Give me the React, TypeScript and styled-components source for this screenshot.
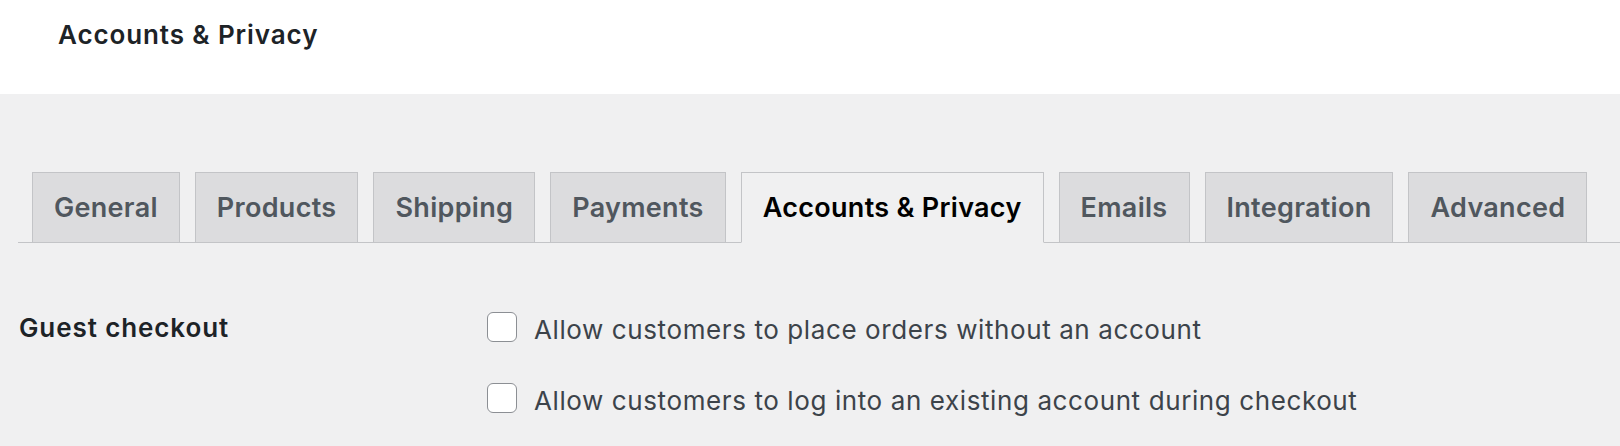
import styled, { createGlobalStyle } from "styled-components";

const GlobalStyle = createGlobalStyle`
  html, body {
    margin: 0;
    padding: 0;
    background: #f0f0f1;
  }
  body {
    font-family: Inter, "Noto Sans", "Liberation Sans", sans-serif;
    color: #3c434a;
  }
`;

const tabs = [
  "General",
  "Products",
  "Shipping",
  "Payments",
  "Accounts & Privacy",
  "Emails",
  "Integration",
  "Advanced",
];

const guestOptions = [
  "Allow customers to place orders without an account",
  "Allow customers to log into an existing account during checkout",
];

export default function App() {
  return (
    <>
      <GlobalStyle />
      <Header>
        <PageTitle>Accounts &amp; Privacy</PageTitle>
      </Header>
      <Main>
        <TabNav>
          {tabs.map((tab) => (
            <Tab key={tab} $active={tab === "Accounts & Privacy"}>
              {tab}
            </Tab>
          ))}
        </TabNav>
        <FormRow>
          <RowLabel>Guest checkout</RowLabel>
          <Options>
            {guestOptions.map((option) => (
              <OptionLabel key={option}>
                <Checkbox type="checkbox" />
                <OptionText>{option}</OptionText>
              </OptionLabel>
            ))}
          </Options>
        </FormRow>
      </Main>
    </>
  );
}

const Header = styled.header`
  height: 94px;
  background: #fff;
  padding: 18px 0 0 58px;
  box-sizing: border-box;
`;

const PageTitle = styled.h1`
  margin: 0;
  font-size: 26px;
  line-height: 34px;
  font-weight: 600;
  letter-spacing: 0.9px;
  color: #1d2327;
`;

const Main = styled.main`
  padding: 78px 0 0 18px;
`;

const TabNav = styled.nav`
  display: flex;
  align-items: flex-end;
  gap: 15px;
  padding-left: 14px;
  border-bottom: 1px solid #c3c4c7;
`;

const Tab = styled.a<{ $active?: boolean }>`
  display: flex;
  align-items: center;
  box-sizing: border-box;
  height: ${(p) => (p.$active ? "71px" : "70px")};
  margin-bottom: ${(p) => (p.$active ? "-1px" : "0")};
  padding: 0 21px;
  border: 1px solid #c3c4c7;
  border-bottom: ${(p) => (p.$active ? "1px solid #f0f0f1" : "none")};
  background: ${(p) => (p.$active ? "#f0f0f1" : "#dcdcde")};
  color: ${(p) => (p.$active ? "#000" : "#50575e")};
  font-size: 27px;
  font-weight: 600;
  letter-spacing: 0.3px;
  white-space: nowrap;
  cursor: pointer;
`;

const FormRow = styled.div`
  display: grid;
  grid-template-columns: 469px 1fr;
  padding-top: 69px;
`;

const RowLabel = styled.div`
  margin-top: 1px;
  padding-left: 1px;
  font-size: 26px;
  line-height: 30px;
  font-weight: 600;
  letter-spacing: 0.9px;
  color: #1d2327;
`;

const Options = styled.div`
  display: flex;
  flex-direction: column;
  gap: 38px;
`;

const OptionLabel = styled.label`
  display: flex;
  align-items: flex-start;
  gap: 17px;
  color: #3c434a;
`;

const OptionText = styled.span`
  margin-top: 3px;
  font-size: 26px;
  line-height: 30px;
  letter-spacing: 0.6px;
`;

const Checkbox = styled.input`
  appearance: none;
  margin: 0;
  width: 30px;
  height: 30px;
  flex: none;
  box-sizing: border-box;
  background: #fff;
  border: 1.5px solid #8c8f94;
  border-radius: 6px;
`;
